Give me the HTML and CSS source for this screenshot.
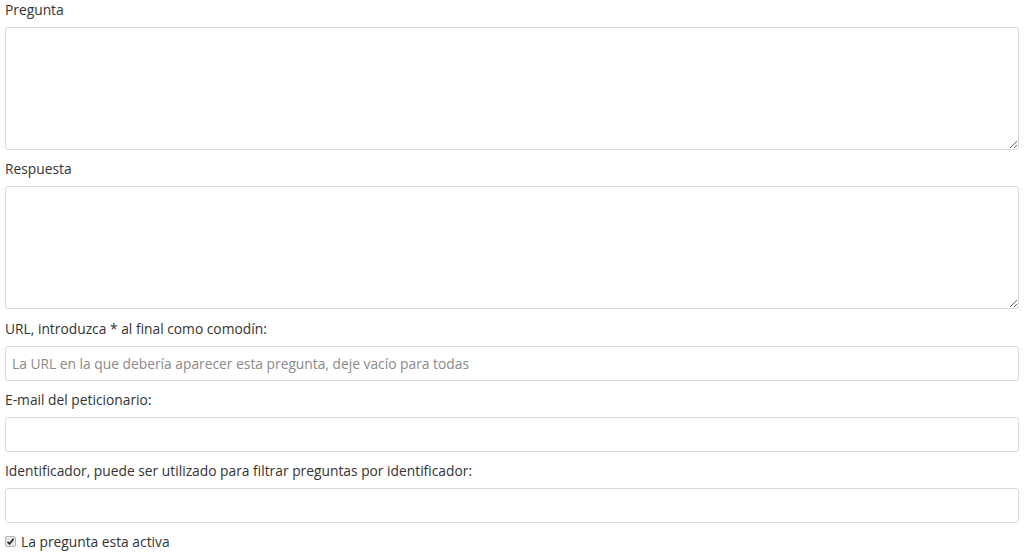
FILE: index.html
```html
<!DOCTYPE html>
<html lang="es">
<head>
  <meta charset="UTF-8">
  <title>Pregunta</title>
  <link rel="stylesheet" href="styles.css">
</head>
<body>
  <form class="question-form">
    <div class="form-group">
      <label for="pregunta">Pregunta</label>
      <textarea id="pregunta" class="form-control area"></textarea>
    </div>
    <div class="form-group spaced">
      <label for="respuesta">Respuesta</label>
      <textarea id="respuesta" class="form-control area"></textarea>
    </div>
    <div class="form-group">
      <label for="url">URL, introduzca * al final como comodín:</label>
      <input id="url" class="form-control" type="text" placeholder="La URL en la que debería aparecer esta pregunta, deje vacío para todas">
    </div>
    <div class="form-group">
      <label for="email">E-mail del peticionario:</label>
      <input id="email" class="form-control" type="text">
    </div>
    <div class="form-group">
      <label for="ident">Identificador, puede ser utilizado para filtrar preguntas por identificador:</label>
      <input id="ident" class="form-control" type="text">
    </div>
    <div class="check">
      <input id="activa" type="checkbox" checked>
      <label for="activa">La pregunta esta activa</label>
    </div>
  </form>
</body>
</html>
```

FILE: styles.css
```css
body {
  margin: 0;
  background-color: #fff;
  color: #333;
  font-family: "Open Sans", "Noto Sans", sans-serif;
  font-size: 13.8px;
}
.question-form {
  width: 1014px;
  padding-left: 5px;
}
.form-group {
  margin-bottom: 9px;
}
.form-group.spaced {
  margin-bottom: 10px;
}
.form-group label {
  display: block;
  line-height: 20px;
  margin-bottom: 7px;
}
.form-control {
  display: block;
  box-sizing: border-box;
  width: 100%;
  height: 35px;
  margin: 0;
  padding: 6px 6px;
  border: 1px solid #dadada;
  border-radius: 3px;
  font-family: inherit;
  font-size: 13.8px;
  color: #333;
}
.form-control::placeholder {
  color: #8a8a8a;
}
.area {
  height: 123px;
  resize: vertical;
}
.check {
  display: flex;
  align-items: center;
  gap: 5px;
  margin-top: 9px;
}
.check input {
  appearance: none;
  box-sizing: border-box;
  width: 11px;
  height: 11px;
  margin: 0;
  border: 1px solid #b5b5b5;
  border-radius: 2px;
  background: #e6e6e6 url("data:image/svg+xml,%3Csvg xmlns='http://www.w3.org/2000/svg' viewBox='0 0 9 9'%3E%3Cpath d='M1.5 4.8 3.6 6.8 7.6 1.8' fill='none' stroke='%23222' stroke-width='1.6'/%3E%3C/svg%3E") center / 9px 9px no-repeat;
}
```
